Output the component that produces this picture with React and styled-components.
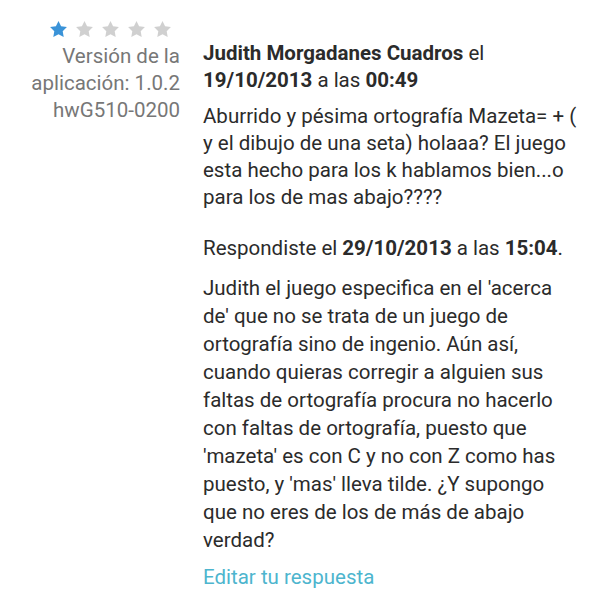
import React from "react";
import styled, { createGlobalStyle } from "styled-components";

const GlobalStyle = createGlobalStyle`
  html, body {
    margin: 0;
    padding: 0;
    background: #ffffff;
  }
  body {
    font-family: Roboto, "Noto Sans", "Liberation Sans", sans-serif;
    -webkit-font-smoothing: antialiased;
  }
`;

const Page = styled.div`
  display: grid;
  grid-template-columns: 180px 1fr;
  column-gap: 23px;
  padding: 21px 20px 0 0;
  width: 599px;
  height: 600px;
  box-sizing: border-box;
  overflow: hidden;
  font-size: 20.5px;
`;

const Side = styled.div`
  display: flex;
  flex-direction: column;
  align-items: flex-end;
`;

const Stars = styled.div`
  display: flex;
  gap: 9px;
  height: 16px;
  padding-right: 9px;
`;

const Star = styled.svg`
  width: 17px;
  height: 16px;
  fill: ${(p) => (p.$on ? "#3a93d8" : "#d0d0d0")};
`;

const Meta = styled.div`
  margin-top: 5.5px;
  color: #777777;
  text-align: right;
  line-height: 27px;
  white-space: nowrap;
`;

const Main = styled.div`
  padding-top: 18.5px;
  color: #2b2b2b;
  min-width: 0;
`;

const Heading = styled.div`
  line-height: 27px;
  margin-top: ${(p) => p.$top || 0}px;
`;

const Text = styled.p`
  margin: ${(p) => p.$top || 0}px 0 0;
  line-height: ${(p) => p.$lh || 27}px;
`;

const Link = styled.a`
  display: block;
  margin-top: 9px;
  line-height: 28px;
  color: #4db5ce;
  text-decoration: none;
  cursor: pointer;
`;

const StarIcon = ({ on }) => (
  <Star $on={on} viewBox="2 2 20 19">
    <path d="M12 2l3.09 6.26L22 9.27l-5 4.87 1.18 6.88L12 17.77l-6.18 3.25L7 14.14 2 9.27l6.91-1.01L12 2z" />
  </Star>
);

export default function App() {
  const rating = 1;
  return (
    <>
      <GlobalStyle />
      <Page>
        <Side>
          <Stars>
            {[0, 1, 2, 3, 4].map((i) => (
              <StarIcon key={i} on={i < rating} />
            ))}
          </Stars>
          <Meta>
            Versión de la
            <br />
            aplicación: 1.0.2
            <br />
            hwG510-0200
          </Meta>
        </Side>
        <Main>
          <Heading>
            <b>Judith Morgadanes Cuadros</b> el <b>19/10/2013</b> a las{" "}
            <b>00:49</b>
          </Heading>
          <Text $top={9}>
            Aburrido y pésima ortografía Mazeta= + ( y el dibujo de una seta)
            holaaa? El juego esta hecho para los k hablamos bien...o para los
            de mas abajo????
          </Text>
          <Heading $top={24}>
            Respondiste el <b>29/10/2013</b> a las <b>15:04</b>.
          </Heading>
          <Text $top={12.5} $lh={28}>
            Judith el juego especifica en el 'acerca de' que no se trata de un
            juego de ortografía sino de ingenio. Aún así, cuando quieras
            corregir a alguien sus faltas de ortografía procura no hacerlo con
            faltas de ortografía, puesto que 'mazeta' es con C y no con Z como
            has puesto, y 'mas' lleva tilde. ¿Y supongo que no eres de los de
            más de abajo verdad?
          </Text>
          <Link>Editar tu respuesta</Link>
        </Main>
      </Page>
    </>
  );
}
